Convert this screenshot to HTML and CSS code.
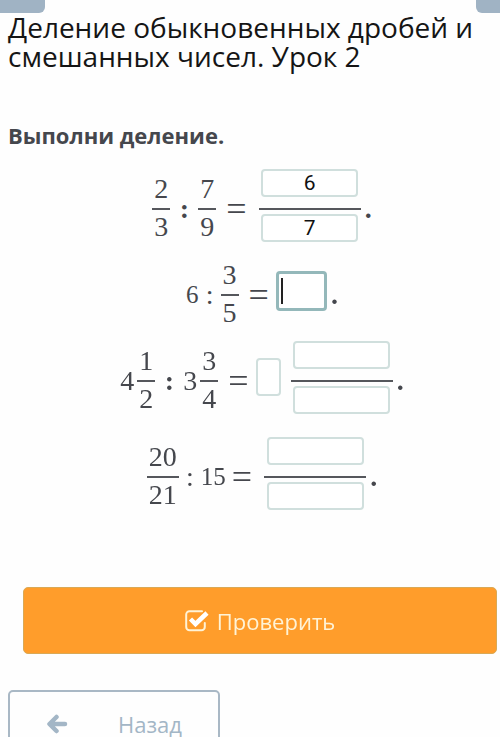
FILE: index.html
```html
<!DOCTYPE html>
<html lang="ru">
<head>
<meta charset="UTF-8">
<meta name="viewport" content="width=device-width, initial-scale=1.0">
<title>Деление обыкновенных дробей и смешанных чисел. Урок 2</title>
<link rel="stylesheet" href="styles.css">
</head>
<body>
<div class="top-bar">
    <div class="top-tab top-tab-left"></div>
    <div class="top-tab top-tab-right"></div>
</div>
<h1 class="title">Деление обыкновенных дробей и смешанных чисел. Урок 2</h1>
<p class="task">Выполни деление.</p>

<form class="exercise" onsubmit="return false">
    <div class="equation">
        <span class="fraction"><span>2</span><span>3</span></span>
        <span class="colon">:</span>
        <span class="fraction"><span>7</span><span>9</span></span>
        <span class="equals">=</span>
        <span class="answer">
            <input type="text" value="6" aria-label="Числитель">
            <input type="text" value="7" aria-label="Знаменатель">
        </span>
        <span class="dot">.</span>
    </div>
    <div class="equation">
        <span class="number small">6</span>
        <span class="colon tight">:</span>
        <span class="fraction"><span>3</span><span>5</span></span>
        <span class="equals near">=</span>
        <input type="text" class="single" aria-label="Ответ" autofocus>
        <span class="dot">.</span>
    </div>
    <div class="equation">
        <span class="number">4</span>
        <span class="fraction"><span>1</span><span>2</span></span>
        <span class="colon">:</span>
        <span class="number">3</span>
        <span class="fraction"><span>3</span><span>4</span></span>
        <span class="equals near">=</span>
        <input type="text" class="whole" aria-label="Целая часть">
        <span class="answer">
            <input type="text" aria-label="Числитель">
            <input type="text" aria-label="Знаменатель">
        </span>
        <span class="dot">.</span>
    </div>
    <div class="equation">
        <span class="fraction wide"><span>20</span><span>21</span></span>
        <span class="colon tight">:</span>
        <span class="number small">15</span>
        <span class="equals">=</span>
        <span class="answer">
            <input type="text" aria-label="Числитель">
            <input type="text" aria-label="Знаменатель">
        </span>
        <span class="dot">.</span>
    </div>

    <button type="submit" class="check">
        <svg width="24" height="22" viewBox="0 0 24 22" fill="none">
            <path d="M17 1.200H4.500A3.300 3.300 0 0 0 1.200 4.500v12.500A3.300 3.300 0 0 0 4.500 20.300h12a3.300 3.300 0 0 0 3.300-3.300v-4" stroke="#fff3d6" stroke-width="2" stroke-linecap="round"/>
            <path d="M5.500 9l5 5L22 3" stroke="#fff" stroke-width="4.500"/>
        </svg>
        Проверить
    </button>
</form>

<button type="button" class="back">
    <svg width="22" height="20" viewBox="0 0 22 20" fill="none" stroke="#a3b6c6" stroke-width="4.500" stroke-linecap="round" stroke-linejoin="round">
        <path d="M10.500 3L3.500 10l7 7M4.500 10H19"/>
    </svg>
    <span>Назад</span>
</button>
</body>
</html>
```

FILE: styles.css
```css
* {
    box-sizing: border-box;
}

body {
    margin: 0;
    background-color: #fefefe;
    font-family: "Open Sans", "Noto Sans", sans-serif;
    color: #45474d;
}

.top-bar {
    display: flex;
    justify-content: space-between;
}

.top-tab {
    height: 13px;
    background-color: #a0b3c4;
}

.top-tab-left {
    width: 45px;
    border-bottom-right-radius: 6px;
}

.top-tab-right {
    width: 24px;
    border-bottom-left-radius: 6px;
}

.title {
    margin: 0 8px;
    font-size: 28px;
    font-weight: 400;
    line-height: 29px;
    color: #151515;
}

.task {
    margin: 48px 8px 18px;
    font-size: 22px;
    font-weight: 700;
    line-height: 32px;
}

.exercise {
    display: flex;
    flex-direction: column;
    gap: 16px;
    margin: 0 3px 0 23px;
}

.equation {
    display: flex;
    align-items: center;
    justify-content: center;
    padding-left: 4px;
    font-family: "Liberation Serif", serif;
    font-size: 28px;
    line-height: 30px;
}

.fraction {
    display: flex;
    flex-direction: column;
    width: 18px;
    margin: -5px 0;
    text-align: center;
}

.fraction.wide {
    width: 32px;
}

.fraction span:first-child {
    padding-bottom: 4px;
    border-bottom: 2px solid #55575c;
}

.fraction span:last-child {
    padding: 2px 0;
}

.number {
    margin-right: 3px;
}

.number.small {
    margin: 0;
    font-size: 25px;
}

.colon {
    width: 28px;
    font-weight: 700;
    text-align: center;
}

.colon.tight {
    width: 22px;
    font-weight: 400;
}

.equals {
    margin: 0 12px 0 10px;
    font-size: 36px;
}

.equals.near {
    margin-right: 7px;
}

.small + .equals {
    margin-left: 6px;
}

/* bottom padding keeps the fraction line on the row's centre */
.answer {
    display: flex;
    flex-direction: column;
    align-items: center;
    width: 102px;
    padding-bottom: 7px;
}

.answer input:first-child {
    margin-bottom: 11px;
}

.answer::before {
    content: "";
    order: 1;
    width: 100%;
    height: 2px;
    background-color: #55575c;
}

.answer input:last-child {
    order: 2;
    margin-top: 4px;
}

input {
    width: 97px;
    height: 28px;
    padding: 0;
    border: 2px solid #d0dfdd;
    border-radius: 4px;
    background-color: #fff;
    font-family: Roboto, sans-serif;
    font-size: 21px;
    color: #111;
    text-align: center;
    outline: none;
}

/* the field being edited shows a tall caret */
.single {
    width: 51px;
    height: 40px;
    margin-bottom: 8px;
    padding-left: 3px;
    border: 3px solid #94b8ba;
    background: linear-gradient(#222, #222) 2px center / 2px 26px no-repeat #fff;
    caret-color: transparent;
    text-align: left;
}

.whole {
    width: 25px;
    height: 38px;
    margin: 0 10px 8px 0;
}

.dot {
    margin-left: 4px;
    font-weight: 700;
}

.check,
.back {
    display: flex;
    align-items: center;
    height: 67px;
    border-radius: 5px;
    font-family: inherit;
    font-size: 22px;
    cursor: pointer;
}

.check {
    justify-content: center;
    gap: 8px;
    margin-top: 54px;
    border: 1px solid #d9a956;
    background-color: #ff9d2b;
    color: #fff3d6;
}

.back {
    gap: 50px;
    width: 212px;
    margin: 36px 8px 0;
    padding: 0 34px 0 36px;
    border: 2px solid #a9b8c5;
    background-color: #fefefe;
    color: #a3b6c6;
}

.back svg {
    flex-shrink: 0;
}
```
